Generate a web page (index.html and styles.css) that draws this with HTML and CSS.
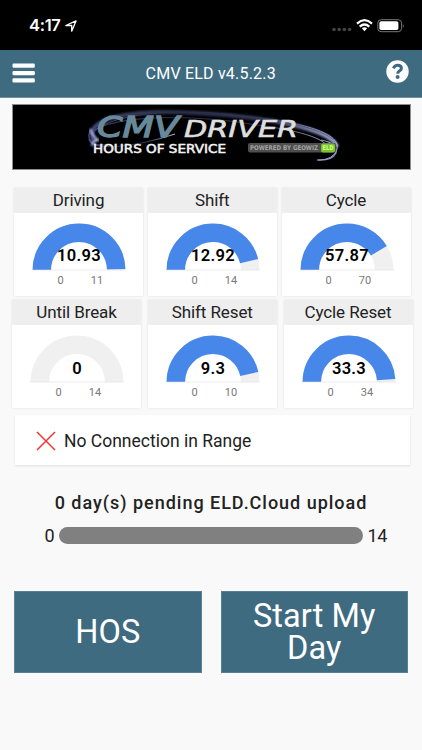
FILE: index.html
```
<!DOCTYPE html>
<html lang="en">
<head>
<meta charset="utf-8">
<meta name="viewport" content="width=device-width, initial-scale=1">
<title>CMV ELD</title>
<link rel="stylesheet" href="styles.css">
</head>
<body>
<div class="status">
  <span class="time">4:17</span>
  <svg class="loc" width="12" height="12" viewBox="0 0 12 12"><path d="M.8 5.5 11 .9 6.7 11.2V5.5Z" fill="none" stroke="#fff" stroke-width="1.3" stroke-linejoin="round"/></svg>
  <svg class="signals" width="76" height="16" viewBox="0 0 76 16">
    <g fill="#444"><circle cx="4" cy="10.5" r="1.8"/><circle cx="9.2" cy="10.5" r="1.8"/><circle cx="14.4" cy="10.5" r="1.8"/><circle cx="19.6" cy="10.5" r="1.8"/></g>
    <g fill="none" stroke="#fff" stroke-width="2.2"><path d="M27 4.6Q34.5 -2.2 42 4.6"/><path d="M29.7 7.6Q34.5 3.4 39.3 7.6"/></g>
    <path d="M31.8 9.3Q34.5 7.3 37.2 9.3L34.5 12.2Z" fill="#fff"/>
    <rect x="47.8" y=".7" width="23.8" height="12" rx="3.4" fill="none" stroke="#777"/>
    <rect x="49.4" y="2.3" width="19" height="8.8" rx="1.8" fill="#fff"/>
    <path d="M72.9 4.7q1.6 2 0 4z" fill="#888"/>
  </svg>
</div>
<header class="bar">
  <svg width="23" height="20" viewBox="0 0 23 20" fill="#fff"><rect x=".5" y=".6" width="22.3" height="4.2" rx="1.2"/><rect x=".5" y="8" width="22.3" height="4.2" rx="1.2"/><rect x=".5" y="15.3" width="22.3" height="4.2" rx="1.2"/></svg>
  <h1>CMV ELD v4.5.2.3</h1>
  <svg class="help" width="23" height="23" viewBox="0 0 23 23"><circle cx="11.5" cy="11.5" r="11.2" fill="#fff"/><path d="M7.4 8.3C8.4 6.1 9.6 5.3 11.7 5.3 13.9 5.3 15.4 6.6 15.4 8.4 15.4 10.9 11.7 10.8 11.7 13.7" fill="none" stroke="#3f6b81" stroke-width="3"/><circle cx="11.6" cy="17" r="2" fill="#3f6b81"/></svg>
</header>
<main>
  <svg class="banner" width="399" height="66" viewBox="0 0 399 66">
    <defs>
      <linearGradient id="swoosh" x1="0" x2="1"><stop offset="0" stop-color="#484d7c"/><stop offset=".35" stop-color="#2a2d45"/><stop offset=".7" stop-color="#34385c"/><stop offset="1" stop-color="#a4abdc"/></linearGradient>
      <filter id="soft"><feGaussianBlur stdDeviation="1.1"/></filter>
    </defs>
    <rect x=".5" y=".5" width="398" height="65" fill="#000" stroke="#8d8d8d"/>
    <g fill="none" stroke="url(#swoosh)">
      <path d="M82 38C68 13 123 5 184 9C251 12 320 25 325 43" stroke-width="4" filter="url(#soft)"/>
      <path d="M79 31C91 12 155 2 229 12C285 17 329 28 325 45Q322 56 306 56M82 26C115 8 200 13 238 20C286 26 314 34 317 45"/>
      <path d="M77 35C79 48 124 43 163 30M78 27C73 39 86 43 96 40" stroke-width="1.2"/>
      <path d="M309 36Q326 39 324 49Q320 57 305 56" stroke="#969dcb" stroke-width="1.2"/>
    </g>
    <path d="M78 25Q82 34 86 36Q80 37 80 42" fill="none" stroke="#b8c2ff" stroke-width="2" filter="url(#soft)"/>
    <g font-family="DejaVu Sans, sans-serif">
      <text x="85" y="33.4" textLength="82" lengthAdjust="spacingAndGlyphs" font-size="28" font-style="italic" fill="#67899a" stroke="#67899a" stroke-width="1.3">CMV</text>
      <text x="172" y="33.4" textLength="114" lengthAdjust="spacingAndGlyphs" font-size="23" font-style="italic" fill="#dedede" stroke="#dedede" stroke-width=".6">DRIVER</text>
      <text x="81" y="49" textLength="133" lengthAdjust="spacingAndGlyphs" font-size="11.5" fill="#f4f4f4" stroke="#f4f4f4" stroke-width=".5">HOURS OF SERVICE</text>
    </g>
    <rect x="236" y="39" width="88" height="9.5" rx="2" fill="#4e4e4e"/>
    <rect x="309" y="39.5" width="14" height="9" rx="2" fill="#79c52c"/>
    <g font-family="DejaVu Sans, sans-serif" font-size="6.5" font-weight="700"><text x="238" y="46.2" textLength="68" lengthAdjust="spacingAndGlyphs" fill="#a2a2a2">POWERED BY GEOWIZ</text><text x="310.5" y="46.2" textLength="11" lengthAdjust="spacingAndGlyphs" fill="#d7ff91">ELD</text></g>
  </svg>

  <section class="row first">
    <article class="card"><h2>Driving</h2><svg class="gauge" viewBox="0 0 129 82"><path class="track" d="M27.8 57a37.2 37.2 0 0 1 74.4 0"/><path class="fill" pathLength="11" stroke-dasharray="10.93 20" d="M27.8 57a37.2 37.2 0 0 1 74.4 0"/><path class="base" d="M18 57h94"/><text class="value" x="65" y="48">10.93</text><text class="limit" x="46.5" y="71">0</text><text class="limit" x="83" y="71">11</text></svg></article>
    <article class="card"><h2>Shift</h2><svg class="gauge" viewBox="0 0 129 82"><path class="track" d="M27.8 57a37.2 37.2 0 0 1 74.4 0"/><path class="fill" pathLength="14" stroke-dasharray="12.92 20" d="M27.8 57a37.2 37.2 0 0 1 74.4 0"/><path class="base" d="M18 57h94"/><text class="value" x="65" y="48">12.92</text><text class="limit" x="46.5" y="71">0</text><text class="limit" x="83" y="71">14</text></svg></article>
    <article class="card"><h2>Cycle</h2><svg class="gauge" viewBox="0 0 129 82"><path class="track" d="M27.8 57a37.2 37.2 0 0 1 74.4 0"/><path class="fill" pathLength="70" stroke-dasharray="57.87 90" d="M27.8 57a37.2 37.2 0 0 1 74.4 0"/><path class="base" d="M18 57h94"/><text class="value" x="65" y="48">57.87</text><text class="limit" x="46.5" y="71">0</text><text class="limit" x="83" y="71">70</text></svg></article>
  </section>
  <section class="row second">
    <article class="card"><h2>Until Break</h2><svg class="gauge" viewBox="0 0 129 82"><path class="track" d="M27.8 57a37.2 37.2 0 0 1 74.4 0"/><path class="base" d="M18 57h94"/><text class="value" x="65" y="48.5">0</text><text class="limit" x="46.5" y="71">0</text><text class="limit" x="83" y="71">14</text></svg></article>
    <article class="card"><h2>Shift Reset</h2><svg class="gauge" viewBox="0 0 129 82"><path class="track" d="M27.8 57a37.2 37.2 0 0 1 74.4 0"/><path class="fill" pathLength="10" stroke-dasharray="9.3 20" d="M27.8 57a37.2 37.2 0 0 1 74.4 0"/><path class="base" d="M18 57h94"/><text class="value" x="65" y="48.5">9.3</text><text class="limit" x="46.5" y="71">0</text><text class="limit" x="83" y="71">10</text></svg></article>
    <article class="card"><h2>Cycle Reset</h2><svg class="gauge" viewBox="0 0 129 82"><path class="track" d="M27.8 57a37.2 37.2 0 0 1 74.4 0"/><path class="fill" pathLength="34" stroke-dasharray="33.3 50" d="M27.8 57a37.2 37.2 0 0 1 74.4 0"/><path class="base" d="M18 57h94"/><text class="value" x="65" y="48.5">33.3</text><text class="limit" x="46.5" y="71">0</text><text class="limit" x="83" y="71">34</text></svg></article>
  </section>

  <div class="connection">
    <svg width="20" height="20" viewBox="0 0 20 20"><path d="M1 1 19 19M19 1 1 19" stroke="#ee3434" stroke-width="1.5"/></svg>
    <span>No Connection in Range</span>
  </div>
  <p class="pending">0 day(s) pending ELD.Cloud upload</p>
  <div class="progress"><span>0</span><div class="meter"></div><span>14</span></div>
  <div class="actions"><button>HOS</button><button>Start My Day</button></div>
</main>
</body>
</html>
```
FILE: styles.css
```
* { box-sizing: border-box; }
body {
  margin: 0;
  width: 422px;
  height: 750px;
  overflow: hidden;
  background: #f9f9f9;
  color: #222;
  font-family: Roboto, sans-serif;
}
svg { display: block; flex: none; }
.status {
  display: flex;
  align-items: flex-start;
  height: 50px;
  padding: 15px 17px 0 29px;
  background: #000;
  color: #fff;
}
.time {
  width: 36px;
  font: 600 16.5px/21px Inter, sans-serif;
  letter-spacing: -0.3px;
}
.loc { margin-top: 5px; }
.signals { margin: 4px -1px 0 auto; }
.bar {
  display: flex;
  align-items: center;
  justify-content: space-between;
  height: 48px;
  padding: 0 12.5px 2px 12px;
  background: #3f6b81;
  border-bottom: 1px solid #6d8fa2;
  color: #fff;
}
.help { margin-top: -2px; }
.bar h1 {
  margin: 2px 0 0;
  font-size: 16px;
  font-weight: 400;
  letter-spacing: 0.2px;
}
main { padding: 5.5px 0 0; }
.banner { margin-left: 12px; }
.row { display: flex; justify-content: space-between; }
.first { margin: 18.5px 11.5px 0 14px; }
.second { margin: 4.5px 9.5px 0 12px; }
.card {
  width: 129px;
  height: 107.5px;
  background: #fff;
  box-shadow: 0 0 2px #ddd;
}
.card h2 {
  height: 25px;
  margin: 0;
  background: #eee;
  text-align: center;
  font-size: 17px;
  font-weight: 400;
  line-height: 25px;
  letter-spacing: -0.1px;
}
.gauge { width: 129px; height: 82px; }
.track, .fill { fill: none; stroke: #f0f0f0; stroke-width: 18.5; }
.fill { stroke: #4787ea; }
.base { stroke: #ddd; stroke-width: 0.6; }
.value {
  fill: #000;
  font-size: 16.5px;
  font-weight: 600;
  letter-spacing: 0.3px;
  text-anchor: middle;
}
.limit {
  fill: #777;
  font-size: 11px;
  letter-spacing: 0;
  text-anchor: middle;
}
.connection {
  display: flex;
  align-items: center;
  gap: 8px;
  width: 395px;
  height: 50px;
  margin: 7px 0 0 14.5px;
  padding: 2px 0 0 21.5px;
  background: #fff;
  box-shadow: 0 1px 2px #ddd;
  font-size: 17.5px;
  letter-spacing: 0;
}
.pending {
  margin: 28px 0 0;
  text-align: center;
  font-size: 18px;
  font-weight: 500;
  line-height: 20px;
  letter-spacing: 0.98px;
}
.progress {
  display: flex;
  align-items: center;
  gap: 5px;
  margin: 13px 0 0 44.5px;
  font-size: 18px;
  line-height: 20px;
  letter-spacing: -0.2px;
}
.progress span:last-child { margin-left: -1px; }
.meter {
  width: 304px;
  height: 17px;
  border-radius: 9px;
  background: #808080;
}
.actions {
  display: flex;
  gap: 19px;
  margin: 45px 0 0 14px;
}
.actions button {
  width: 187.5px;
  height: 82px;
  padding: 0 20px;
  border: 1px solid #568197;
  border-radius: 0;
  background: #3f6b81;
  color: #fff;
  font: 400 32.5px/32px Roboto, sans-serif;
  letter-spacing: 0.1px;
}
```
